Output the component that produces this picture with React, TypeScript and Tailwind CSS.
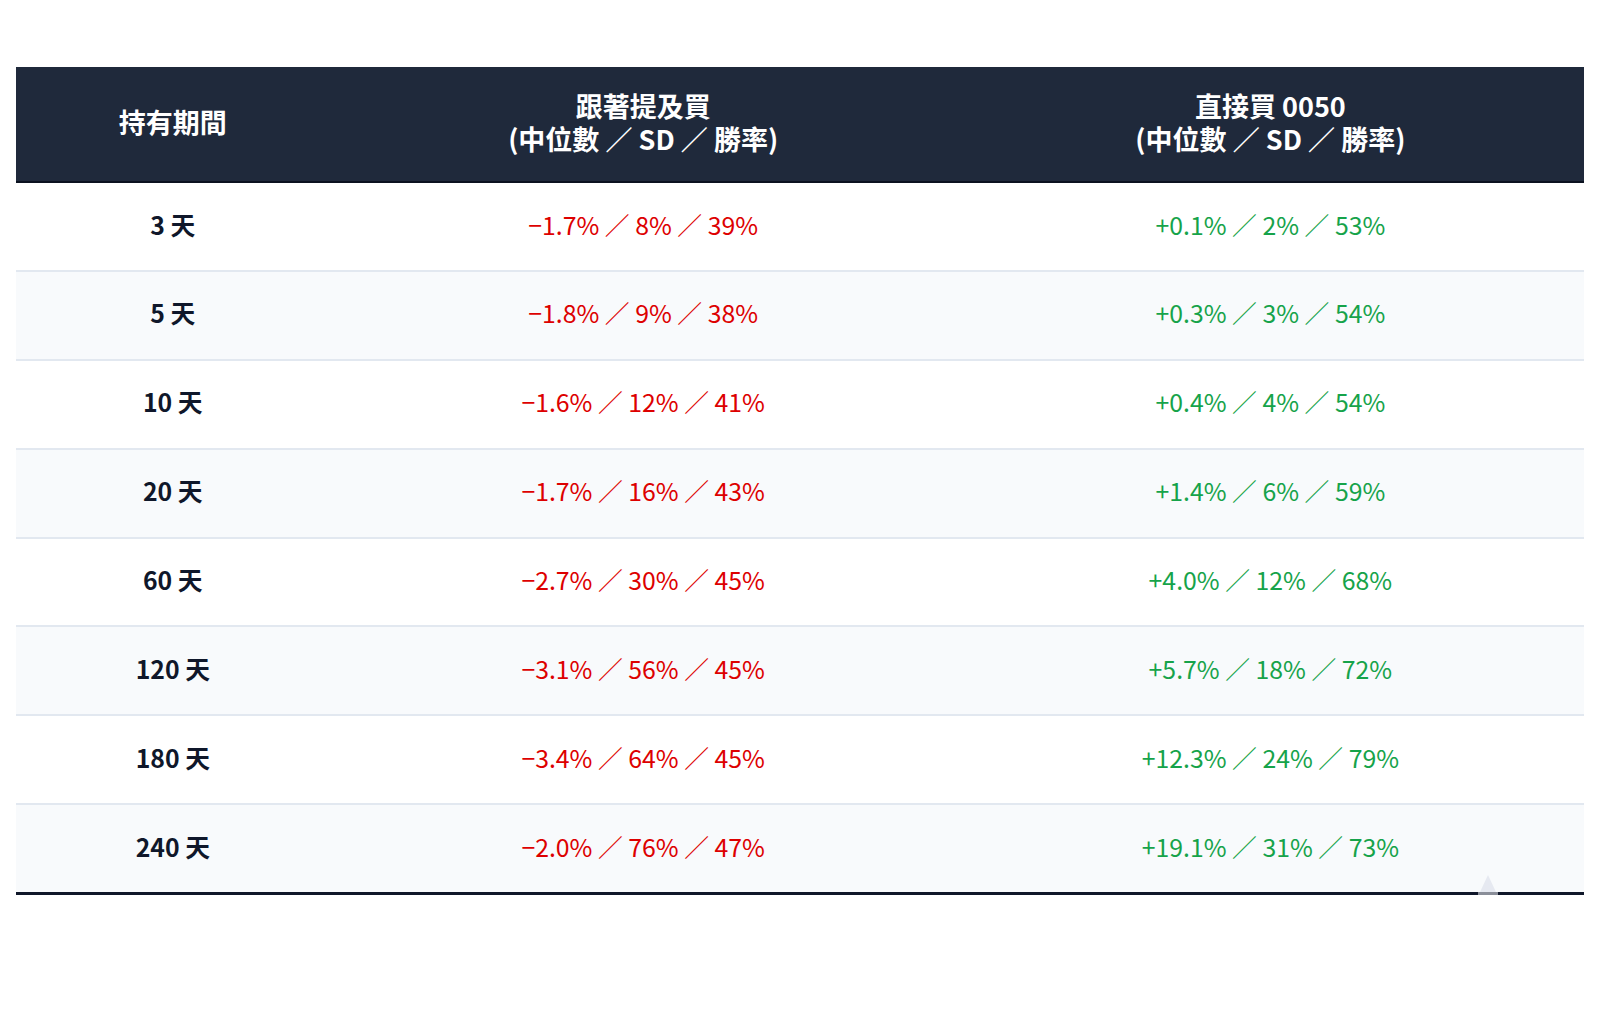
const ROWS = [
  { period: "3 天", follow: "−1.7% ／ 8% ／ 39%", etf: "+0.1% ／ 2% ／ 53%" },
  { period: "5 天", follow: "−1.8% ／ 9% ／ 38%", etf: "+0.3% ／ 3% ／ 54%" },
  { period: "10 天", follow: "−1.6% ／ 12% ／ 41%", etf: "+0.4% ／ 4% ／ 54%" },
  { period: "20 天", follow: "−1.7% ／ 16% ／ 43%", etf: "+1.4% ／ 6% ／ 59%" },
  { period: "60 天", follow: "−2.7% ／ 30% ／ 45%", etf: "+4.0% ／ 12% ／ 68%" },
  { period: "120 天", follow: "−3.1% ／ 56% ／ 45%", etf: "+5.7% ／ 18% ／ 72%" },
  { period: "180 天", follow: "−3.4% ／ 64% ／ 45%", etf: "+12.3% ／ 24% ／ 79%" },
  { period: "240 天", follow: "−2.0% ／ 76% ／ 47%", etf: "+19.1% ／ 31% ／ 73%" },
];

export default function App() {
  return (
    <div className="min-h-[1034px] bg-white px-4 pt-[67px] font-['Noto_Sans_CJK_TC','Noto_Sans',sans-serif]">
      <div className="relative">
        <table className="w-full table-fixed border-collapse">
          <colgroup>
            <col className="w-[20%]" />
            <col className="w-[40%]" />
            <col className="w-[40%]" />
          </colgroup>
          <thead>
            <tr className="border-b-2 border-[#0b1220] bg-[#1f293b] text-[27px] leading-[33px] text-white">
              <th className="pt-[21.5px] pb-[26.5px] text-center font-bold">持有期間</th>
              <th className="pt-[21.5px] pb-[26.5px] text-center font-bold">
                跟著提及買
                <br />
                (中位數 ／ SD ／ 勝率)
              </th>
              <th className="pt-[21.5px] pb-[26.5px] text-center font-bold">
                直接買 0050
                <br />
                (中位數 ／ SD ／ 勝率)
              </th>
            </tr>
          </thead>
          <tbody className="text-[24.8px] leading-[32px]">
            {ROWS.map((r, i) => {
              const last = i === ROWS.length - 1;
              return (
                <tr
                  key={r.period}
                  className={`${i % 2 === 1 ? "bg-[#f8fafc]" : "bg-white"} ${
                    last ? "border-b-[3px] border-[#0f172a]" : "border-b-2 border-[#e2e8f0]"
                  }`}
                >
                  <td className="pt-[24.5px] pb-[30.4px] text-center font-bold text-[#0f172a]">{r.period}</td>
                  <td className="pt-[24.5px] pb-[30.4px] text-center text-[#dd0000]">{r.follow}</td>
                  <td className="pt-[24.5px] pb-[30.4px] text-center text-[#16a34a]">{r.etf}</td>
                </tr>
              );
            })}
          </tbody>
        </table>
        {/* small marker sitting on the bottom rule */}
        <svg
          className="absolute left-[1461px] bottom-0"
          width="22"
          height="22"
          viewBox="0 0 22 22"
        >
          <path d="M11 2 L19 19 L3 19 Z" fill="#e6e9f1" />
          <rect x="1" y="19" width="20" height="3" fill="#8a8e99" />
        </svg>
      </div>
    </div>
  );
}
